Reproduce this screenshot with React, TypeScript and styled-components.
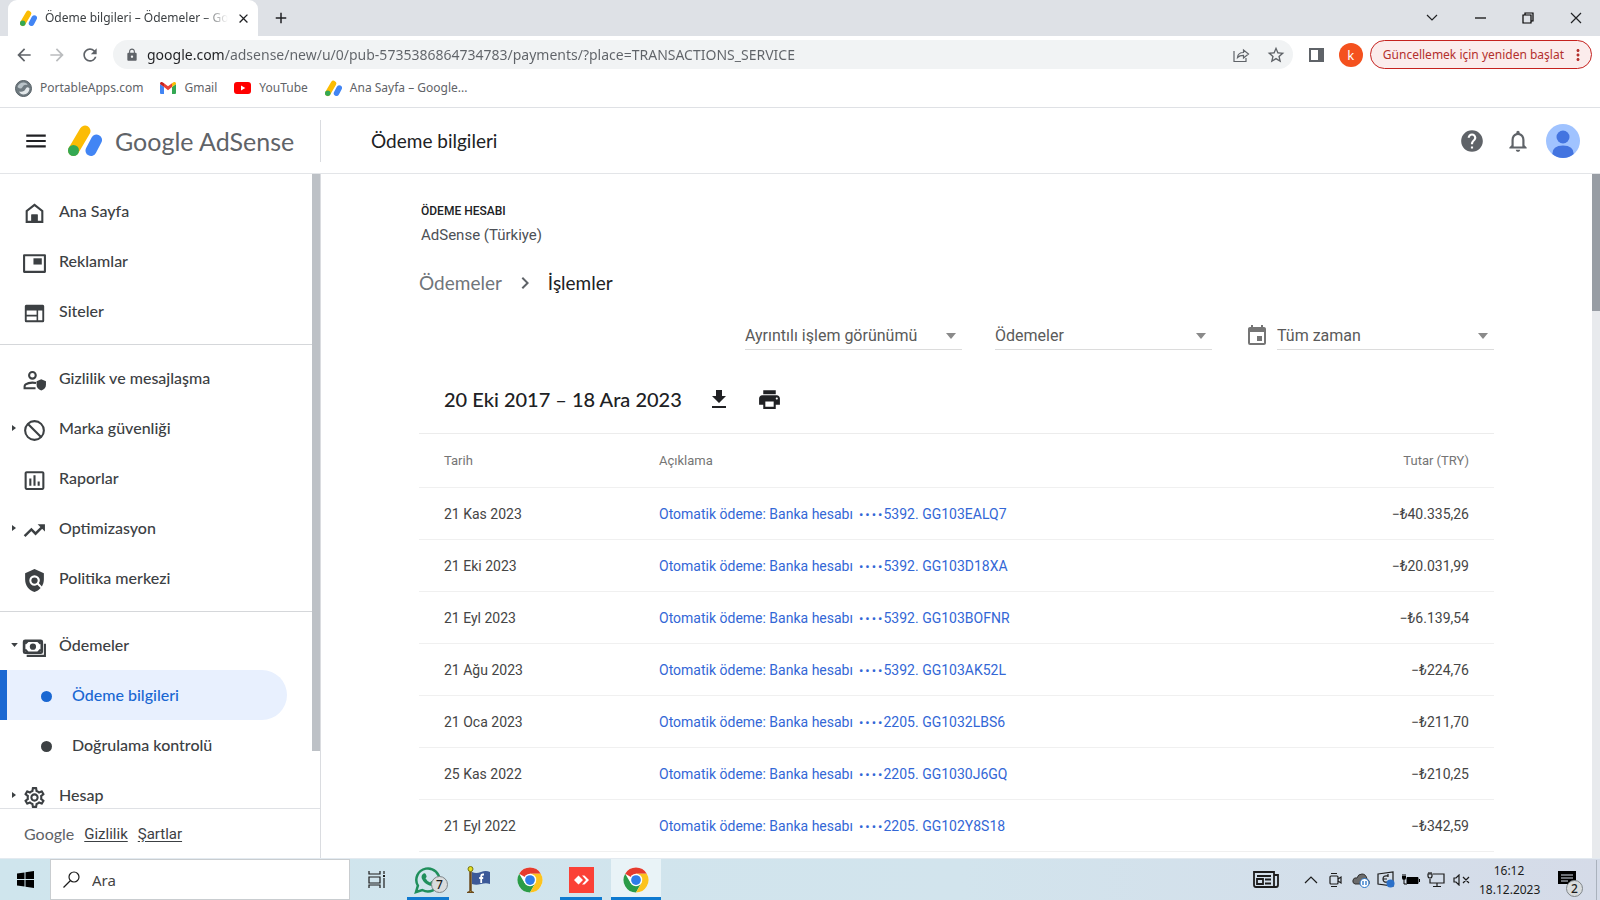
import React from 'react';
import styled, { createGlobalStyle, css } from 'styled-components';
import {
  MdArrowBack, MdArrowForward, MdRefresh, MdLock, MdStarBorder, MdClose, MdAdd, MdMenu, MdHelp,
  MdNotificationsNone, MdPolicy, MdPrint, MdEvent, MdChevronRight,
  MdInsertChartOutlined, MdOutlineSettings, MdMoreVert,
} from 'react-icons/md';

const sans = "'Lato', 'Open Sans', sans-serif";
const roboto = "'Roboto', sans-serif";
const system = "'Noto Sans', 'Open Sans', sans-serif";

const GlobalStyle = createGlobalStyle`
  *, *::before, *::after { box-sizing: border-box; }
  body { margin: 0; background: #fff; color: #3c4043; font-family: ${roboto}; }
  button, input, select { font: inherit; color: inherit; margin: 0; padding: 0; border: 0; background: none; outline: none; }
  button { cursor: pointer; display: inline-flex; align-items: center; justify-content: center; }
  a { color: inherit; text-decoration: none; }
  ul { list-style: none; margin: 0; padding: 0; }
  h1, h2, p { margin: 0; font-weight: 400; }
  svg { display: block; flex: none; }
`;

const Screen = styled.div`
  display: flex;
  flex-direction: column;
  height: 100vh;
  overflow: hidden;
`;

/* ---------- browser frame ---------- */

const TabStrip = styled.div`
  display: flex;
  flex: none;
  align-items: center;
  height: 36px;
  padding-left: 8px;
  background: #dee1e6;
  color: #202124;
`;
const Tab = styled.div`
  display: flex;
  align-items: center;
  align-self: stretch;
  gap: 8px;
  width: 250px;
  padding: 0 8px 0 12px;
  border-radius: 9px 9px 0 0;
  background: #fff;
`;
const TabTitle = styled.span`
  flex: 1;
  white-space: nowrap;
  font: 12px/20px ${system};
  color: #3c4043;
  mask-image: linear-gradient(90deg, #000 86%, transparent);
`;
const TabButton = styled.button`
  width: 18px;
  height: 18px;
  font-size: 15px;
`;
const NewTab = styled(TabButton)`
  margin-left: 14px;
  font-size: 18px;
`;
const WindowControls = styled.div`
  display: flex;
  margin-left: auto;
`;
const WindowButton = styled.button`
  width: 48px;
  height: 30px;
`;

const Toolbar = styled.div`
  display: flex;
  flex: none;
  align-items: center;
  height: 37px;
  padding: 0 8px 0 12px;
  color: #5f6368;
`;
const NavButton = styled.button<{ $faded?: boolean }>`
  width: 23px;
  height: 24px;
  margin-right: 10px;
  font-size: 20px;
  color: ${p => (p.$faded ? '#babcbe' : '#5f6368')};
`;
const AddressBar = styled.div`
  display: flex;
  flex: 1;
  align-items: center;
  gap: 8px;
  height: 29px;
  margin-left: 2px;
  padding: 0 6px 0 12px;
  border-radius: 15px;
  background: #f1f3f4;
  font-size: 14px;
`;
const AddressInput = styled.input`
  flex: 1;
  min-width: 0;
  height: 24px;
  font: 14px/24px ${system};
  background: linear-gradient(90deg, #202124 77px, #5f6368 77px);
  background-clip: text;
  -webkit-background-clip: text;
  -webkit-text-fill-color: transparent;
`;
const BarButton = styled.button`
  width: 22px;
  height: 22px;
  margin-left: 4px;
`;
const PanelButton = styled(BarButton)`
  margin: 0 11px 0 13px;
`;
const Profile = styled.button`
  width: 24px;
  height: 24px;
  margin-right: 7px;
  border-radius: 50%;
  background: #f4511e;
  color: #fff;
  font: 13px/24px ${system};
`;
const UpdateButton = styled.button`
  gap: 5px;
  height: 29px;
  padding: 0 4px 0 12px;
  border: 1px solid #c5221f;
  border-radius: 15px;
  background: #fbecec;
  color: #b3302d;
  font: 12px/20px ${system};
`;

const Bookmarks = styled.nav`
  display: flex;
  flex: none;
  align-items: center;
  gap: 17px;
  height: 35px;
  padding: 0 15px 4px;
  border-bottom: 1px solid #dfe1e5;
  font: 12px/20px ${system};
  color: #5f6368;
`;
const Bookmark = styled.a`
  display: flex;
  align-items: center;
  gap: 8px;
`;

/* ---------- AdSense header ---------- */

const Header = styled.header`
  display: flex;
  flex: none;
  align-items: center;
  height: 66px;
  padding: 0 20px 0 24px;
  border-bottom: 1px solid #e3e5e8;
  color: #5f6368;
`;
const MenuButton = styled.button`
  width: 24px;
  height: 24px;
  margin-right: 20px;
  font-size: 26px;
  color: #202124;
`;
const Brand = styled.a`
  display: flex;
  align-items: center;
  gap: 13px;
  width: 253px;
  height: 42px;
  border-right: 1px solid #dadce0;
  font: 25px/36px ${sans};
`;
const PageTitle = styled.h1`
  margin-left: 50px;
  font: 19px/28px ${sans};
  color: #202124;
`;
const HeaderActions = styled.div`
  display: flex;
  align-items: center;
  gap: 10px;
  margin-left: auto;
`;
const IconButton = styled.button`
  padding: 0 5px;
  font-size: 26px;
`;
const AvatarButton = styled.button`
  border-radius: 50%;
`;

/* ---------- side navigation ---------- */

const Body = styled.div`
  display: flex;
  flex: 1;
  min-height: 0;
`;
const Sidebar = styled.aside`
  display: flex;
  flex: none;
  flex-direction: column;
  width: 321px;
  border-right: 1px solid #dadce0;
`;
const SideScroll = styled.div`
  display: flex;
  flex: 1;
  min-height: 0;
`;
const NavList = styled.nav`
  flex: 1;
  overflow: hidden;
  padding-top: 12px;
  font: 500 16px/24px ${sans};
`;
const ScrollTrack = styled.div<{ $track: string }>`
  flex: none;
  width: 8px;
  background: ${p => p.$track};
`;
const ScrollThumb = styled.div<{ $size: number; $color: string }>`
  height: ${p => p.$size}%;
  background: ${p => p.$color};
`;
const NavGroup = styled.ul`
  & + & {
    margin-top: 8px;
    padding-top: 8px;
    border-top: 1px solid #d5d7da;
  }
`;
const NavItem = styled.a`
  display: flex;
  align-items: center;
  height: 50px;
  padding-left: 10px;
  color: #3c4043;
`;
const Caret = styled.span`
  display: flex;
  justify-content: center;
  width: 8px;
  margin-right: 4px;
`;
const NavIcon = styled.span`
  display: flex;
  justify-content: center;
  width: 25px;
  margin-right: 12px;
  padding-top: 4px;
  font-size: 25px;
`;
const SubItem = styled.a<{ $active?: boolean }>`
  display: flex;
  align-items: center;
  gap: 20px;
  height: 50px;
  margin-right: 25px;
  padding-left: 34px;
  border-left: 7px solid transparent;
  color: #3c4043;
  ${p => p.$active && css`
    border-left-color: #1967d2;
    border-radius: 0 25px 25px 0;
    background: #e8f0fe;
    color: #1967d2;
  `}
`;
const Dot = styled.span`
  width: 11px;
  height: 11px;
  margin-top: 3px;
  border-radius: 50%;
  background: currentColor;
`;
const SideFooter = styled.footer`
  display: flex;
  align-items: center;
  gap: 10px;
  height: 50px;
  padding-left: 24px;
  border-top: 1px solid #dfe1e5;
  font: 15px/24px ${roboto};
  color: #3c4043;
  a { text-decoration: underline; text-underline-offset: 2px; }
`;
const GoogleMark = styled.span`
  font: 16px/24px ${sans};
  color: #5f6368;
`;

/* ---------- payments content ---------- */

const Main = styled.main`
  flex: 1;
  min-width: 0;
  overflow: hidden;
  padding: 26px 98px 0;
`;
const AccountLabel = styled.p`
  padding-left: 2px;
  font: 500 12px/22px ${roboto};
  color: #202124;
`;
const AccountName = styled.p`
  padding-left: 2px;
  font: 15px/26px ${roboto};
  color: #4d5156;
`;
const Crumbs = styled.nav`
  display: flex;
  align-items: center;
  gap: 11px;
  margin-top: 20px;
  font: 19px/30px ${sans};
  color: #202124;
  svg { font-size: 24px; color: #5f6368; }
`;
const CrumbLink = styled.a`
  color: #70757a;
`;
const Filters = styled.div`
  display: flex;
  justify-content: flex-end;
  gap: 33px;
  margin-top: 24px;
`;
const FilterField = styled.label`
  display: flex;
  align-items: center;
  gap: 8px;
  font-size: 24px;
  color: #757575;
`;
const SelectBox = styled.span`
  display: flex;
  align-items: center;
  width: 217px;
  height: 28px;
  border-bottom: 1px solid #dcdcdc;
  padding-right: 6px;
`;
const Select = styled.select`
  flex: 1;
  min-width: 0;
  appearance: none;
  font: 16px/24px ${roboto};
  color: #5a5a5a;
`;
const RangeBar = styled.div`
  display: flex;
  align-items: center;
  gap: 25px;
  height: 83px;
  padding: 15px 25px 0;
  color: #202124;
  button { width: 25px; height: 24px; font-size: 25px; }
`;
const RangeTitle = styled.h2`
  font: 500 20px/30px ${sans};
`;
const Transactions = styled.table`
  width: 100%;
  border-collapse: collapse;
  border-top: 1px solid #ececec;
  font: 14px/20px ${roboto};
  color: #454545;
  th, td { height: 52px; padding: 0; border-bottom: 1px solid #f0f0f0; text-align: left; font-weight: 400; }
  th { height: 54px; font-size: 13px; color: #757575; }
  th:first-child, td:first-child { width: 240px; padding-left: 25px; }
  th:last-child, td:last-child { padding-right: 25px; text-align: right; }
  a { color: #3367d6; }
`;
const MaskDots = styled.span`
  display: inline-flex;
  gap: 2px;
  margin: 0 1px 0 6px;
  font-size: 13px;
  line-height: 16px;
`;

/* ---------- Windows taskbar ---------- */

const Taskbar = styled.footer`
  display: flex;
  flex: none;
  align-items: stretch;
  height: 42px;
  border-top: 1px solid #e3eaf0;
  background: linear-gradient(90deg, #cfe5ed, #d2e4ed 60%, #d5dbe8);
  font-family: ${system};
  color: #1c1c1c;
`;
const TaskButton = styled.button<{ $running?: boolean; $active?: boolean; $wide?: boolean }>`
  position: relative;
  width: ${p => (p.$wide ? 50 : 42)}px;
  margin-right: ${p => (p.$wide ? 0 : 9)}px;
  border-bottom: 3px solid ${p => (p.$running ? '#0f7ad0' : 'transparent')};
  border-top: 3px solid transparent;
  ${p => p.$active && css`
    background: #e9f3f7;
    border-top-color: #e9f3f7;
  `}
`;
const SearchBox = styled.label`
  display: flex;
  align-items: center;
  gap: 12px;
  width: 300px;
  margin-right: 6px;
  padding-left: 12px;
  border: 1px solid #c9cdd0;
  background: #fff;
`;
const SearchInput = styled.input`
  flex: 1;
  min-width: 0;
  font: 15px/24px ${system};
  &::placeholder { color: #444; opacity: 1; }
`;
const Badge = styled.span<{ $x: number; $y: number }>`
  position: absolute;
  left: ${p => p.$x}px;
  top: ${p => p.$y}px;
  width: 17px;
  height: 17px;
  border: 1px solid #7f8589;
  border-radius: 50%;
  background: #d9dcdd;
  font: 500 12px/15px ${system};
  text-align: center;
`;
const Tray = styled.div`
  display: flex;
  align-items: center;
  gap: 5px;
  margin-left: auto;
`;
const TrayButton = styled.button`
  width: 20px;
  height: 30px;
`;
const NewsButton = styled.button`
  width: 28px;
  height: 30px;
  margin-right: 16px;
`;
const Clock = styled.time`
  width: 60px;
  margin: 0 13px 0 3px;
  font-size: 12px;
  line-height: 19px;
  text-align: center;
  white-space: nowrap;
`;
const NoticeButton = styled.button`
  position: relative;
  width: 40px;
  height: 40px;
  border-right: 1px solid #aab2bd;
  margin-right: 3px;
  padding-right: 20px;
`;

/* ---------- drawings ---------- */

const AdSenseLogo = ({ size }: { size: number }) => (
  <svg width={size} height={size} viewBox="0 0 34 32">
    <path d="M17 6 5.500 25.500" stroke="#fbbc04" strokeWidth="11" strokeLinecap="round" />
    <circle cx="5.500" cy="25.500" r="5.500" fill="#34a853" />
    <path d="M28.500 15 23 25.500" stroke="#4285f4" strokeWidth="11" strokeLinecap="round" />
  </svg>
);
const ChromeLogo = () => (
  <svg width="26" height="26" viewBox="0 0 48 48">
    <circle cx="24" cy="24" r="23" fill="#fff" />
    <path d="M24 24 4.080 12.500A23 23 0 0 1 43.920 12.500H24Z" fill="#e53b2e" />
    <path d="M4.080 12.500A23 23 0 0 0 24 47L34 29.700 24 35 14 29.700Z" fill="#2a9c48" />
    <path d="M43.920 12.500A23 23 0 0 1 24 47L34 29.700 34 18 24 12.500Z" fill="#fcc31e" />
    <circle cx="24" cy="24" r="11.500" fill="#fff" />
    <circle cx="24" cy="24" r="9" fill="#2f7de9" />
  </svg>
);
const GmailLogo = () => (
  <svg width="16" height="12" viewBox="0 0 16 12">
    <path d="M0 2v9q0 1 1 1h3V5L0 2Z" fill="#4285f4" />
    <path d="M16 2v9q0 1-1 1h-3V5l4-3Z" fill="#34a853" />
    <path d="M12 1.200V5l4-3V1.500Q15.500-.7 13.500.2Z" fill="#fbbc04" />
    <path d="M4 1.200V5L0 2V1.500Q.5-.7 2.500.2Z" fill="#c5221f" />
    <path d="M4 1.200 8 4.300 12 1.200V5L8 8.200 4 5Z" fill="#ea4335" />
  </svg>
);
const YouTubeLogo = () => (
  <svg width="17" height="12" viewBox="0 0 17 12">
    <rect width="17" height="12" rx="3" fill="#f00" />
    <path d="m7 3.500 4.300 2.500L7 8.500Z" fill="#fff" />
  </svg>
);
const PortableLogo = () => (
  <svg width="17" height="17" viewBox="0 0 17 17">
    <circle cx="8.500" cy="8.500" r="8" fill="#6f7a80" stroke="#566066" />
    <path d="M2.500 7Q4 2.500 8.500 2.500 12 2.500 12.500 5 9 4 7.500 7 6 10 2.500 7Z" fill="#b9c3c8" />
    <path d="M4 11.500q5 1 6.500-2.500Q12 6 14.500 8.500 14 14 8.500 14.500 5.500 14.500 4 11.500Z" fill="#e3e8ea" />
  </svg>
);
const HomeIcon = () => (
  <svg width="25" height="25" viewBox="0 0 24 24" fill="currentColor">
    <path d="M12 2.500 3.500 9v12h17V9L12 2.500Zm6.500 16.500h-3.500v-6H9v6H5.500v-9L12 5l6.500 5v9Z" />
    <path d="M9 13h6v7H9z" />
  </svg>
);
const AdsIcon = () => (
  <svg width="25" height="25" viewBox="0 0 24 24" fill="currentColor">
    <path d="M22 3H2Q1 3 1 4v16q0 1 1 1h20q1 0 1-1V4q0-1-1-1Zm-1 16H3V5h18v14Z" />
    <path d="M11 7h8v6h-8z" />
  </svg>
);
const SitesIcon = () => (
  <svg width="25" height="25" viewBox="0 0 24 24" fill="currentColor">
    <path d="M20 3.500H4q-1.300 0-1.300 1.500v14Q2.700 20.500 4 20.500h16q1.300 0 1.300-1.500V5q0-1.500-1.300-1.500ZM14 18.500H4.500v-3.700H14v3.700Zm0-5.200H4.500V9H14v4.300Zm5.500 5.200h-4V9h4v9.500Z" />
  </svg>
);
const PrivacyIcon = () => (
  <svg width="25" height="25" viewBox="0 0 24 24" fill="none">
    <circle cx="10" cy="7" r="3.200" stroke="currentColor" strokeWidth="2" />
    <path d="M13.500 14.500Q11.500 14 10 14q-4 0-6.500 1.800-1 .7-1 1.800V19.500H13" stroke="currentColor" strokeWidth="2" />
    <path d="m18.500 10.800 4.500 2v3.200q0 4-4.500 5.500-4.500-1.500-4.500-5.500v-3.200Z" fill="currentColor" />
  </svg>
);
const BlockIcon = () => (
  <svg width="25" height="25" viewBox="0 0 24 24" fill="none" stroke="currentColor" strokeWidth="2">
    <circle cx="12" cy="12" r="9" />
    <path d="m5.500 5.500 13 13" />
  </svg>
);
const TrendIcon = () => (
  <svg width="25" height="25" viewBox="0 0 24 24" fill="none" stroke="currentColor" strokeWidth="2.400">
    <path d="m2.500 17.500 6.500-6.500 4 4 7-7" />
    <path d="M15 6h7v7Z" fill="currentColor" stroke="none" />
  </svg>
);
const PaymentsIcon = () => (
  <svg width="25" height="25" viewBox="0 0 24 24" fill="none" stroke="currentColor">
    <rect x="2" y="5.500" width="17" height="11.500" rx="1" strokeWidth="2.500" />
    <circle cx="10.500" cy="11.200" r="3" fill="currentColor" stroke="none" />
    <path d="M3 8.500 5.500 6M18 8.500 15.500 6M3 14l2.500 2.500M18 14l-2.500 2.500" strokeWidth="2" />
    <path d="M4.500 20H22V8.500" strokeWidth="2" />
  </svg>
);
const RightCaret = () => <svg width="4" height="6" viewBox="0 0 4 6"><path d="M0 0v6l4-3Z" fill="currentColor" /></svg>;
const DownCaret = ({ wide }: { wide?: boolean }) => (
  <svg width={wide ? 10 : 7} height={wide ? 6 : 4} viewBox="0 0 10 6"><path d="M0 0h10L5 6Z" fill={wide ? '#8a8a8a' : 'currentColor'} /></svg>
);
const DownloadIcon = () => (
  <svg width="24" height="24" viewBox="0 0 24 24" fill="currentColor"><path d="M5 21h14v-2H5v2ZM19 9h-4V3H9v6H5l7 7 7-7Z" /></svg>
);
const WhatsAppIcon = () => (
  <svg width="28" height="28" viewBox="0 0 28 28" fill="none">
    <path d="M2 26l1.900-6.300A11.500 11.500 0 1 1 8.300 24Z" stroke="#1f8f5c" strokeWidth="2.500" />
    <path d="M9.500 7.500q1.500-1 2.300.7l.8 2q.2.800-1.100 2 1.600 3 4.600 4.300 1.300-1.600 2-1.400l2.500 1.200q.8.500 0 2-1.800 2.500-5.200 1.200-5.500-2-7.700-7.300-.7-3 1.800-4.700Z" fill="#1f8f5c" />
  </svg>
);
const FlagIcon = () => (
  <svg width="26" height="28" viewBox="0 0 26 28">
    <path d="M4.500 4v21" stroke="#6b4a1d" strokeWidth="2.500" />
    <circle cx="4.500" cy="3" r="2.500" fill="#e4df23" stroke="#777611" />
    <path d="M1 26.500q3.500-3 7 0Z" fill="#d5b436" stroke="#6b4a1d" />
    <path d="M6 6q4 2 9 0t9 0v12q-4-1.500-9 0t-9 0Z" fill="#3b5998" />
    <path d="M18 8.500h-1q-1.800 0-1.800 2V17M13.200 12h4" stroke="#fff" strokeWidth="1.800" fill="none" />
  </svg>
);
const RemoteIcon = () => (
  <svg width="25" height="26" viewBox="0 0 25 26">
    <rect width="25" height="26" fill="#fb4136" />
    <path d="M9.500 8.500 14 13l-4.500 4.500L5 13ZM13 8.500h2.500L20 13l-4.500 4.500H13L17 13Z" fill="#fff" />
  </svg>
);

const line = { fill: 'none', stroke: 'currentColor', strokeWidth: 1.2 } as const;

/* ---------- data ---------- */

type Entry = { label: string; icon: React.ReactNode; caret?: 'right' | 'down'; children?: { label: string; active?: boolean }[] };

const groups: Entry[][] = [
  [
    { label: 'Ana Sayfa', icon: <HomeIcon /> },
    { label: 'Reklamlar', icon: <AdsIcon /> },
    { label: 'Siteler', icon: <SitesIcon /> },
  ],
  [
    { label: 'Gizlilik ve mesajlaşma', icon: <PrivacyIcon /> },
    { label: 'Marka güvenliği', icon: <BlockIcon />, caret: 'right' },
    { label: 'Raporlar', icon: <MdInsertChartOutlined /> },
    { label: 'Optimizasyon', icon: <TrendIcon />, caret: 'right' },
    { label: 'Politika merkezi', icon: <MdPolicy /> },
  ],
  [
    {
      label: 'Ödemeler', icon: <PaymentsIcon />, caret: 'down',
      children: [{ label: 'Ödeme bilgileri', active: true }, { label: 'Doğrulama kontrolü' }],
    },
    { label: 'Hesap', icon: <MdOutlineSettings />, caret: 'right' },
  ],
];

const rows = [
  ['21 Kas 2023', '5392. GG103EALQ7', '40.335,26'],
  ['21 Eki 2023', '5392. GG103D18XA', '20.031,99'],
  ['21 Eyl 2023', '5392. GG103BOFNR', '6.139,54'],
  ['21 Ağu 2023', '5392. GG103AK52L', '224,76'],
  ['21 Oca 2023', '2205. GG1032LBS6', '211,70'],
  ['25 Kas 2022', '2205. GG1030J6GQ', '210,25'],
  ['21 Eyl 2022', '2205. GG102Y8S18', '342,59'],
];

const Filter = ({ label, value, icon }: { label: string; value: string; icon?: React.ReactNode }) => (
  <FilterField>
    {icon}
    <SelectBox>
      <Select aria-label={label} defaultValue={value}><option>{value}</option></Select>
      <DownCaret wide />
    </SelectBox>
  </FilterField>
);

export default function App() {
  return (
    <Screen>
      <GlobalStyle />
      <TabStrip>
        <Tab>
          <AdSenseLogo size={17} />
          <TabTitle>Ödeme bilgileri – Ödemeler – Go</TabTitle>
          <TabButton aria-label="Sekmeyi kapat"><MdClose /></TabButton>
        </Tab>
        <NewTab aria-label="Yeni sekme"><MdAdd /></NewTab>
        <WindowControls>
          <WindowButton aria-label="Sekmelerde ara"><svg width="12" height="8" viewBox="0 0 12 8" {...line}><path d="m1 1 5 5 5-5" /></svg></WindowButton>
          <WindowButton aria-label="Simge durumuna küçült"><svg width="11" height="2"><path d="M0 1h11" stroke="#000" strokeWidth="1.200" /></svg></WindowButton>
          <WindowButton aria-label="Önceki boyut"><svg width="12" height="12" viewBox="0 0 12 12" {...line} stroke="#000"><path d="M1 3h8v8H1zM3 3V1h8v8H9" /></svg></WindowButton>
          <WindowButton aria-label="Kapat"><svg width="12" height="12" viewBox="0 0 12 12" {...line}><path d="m1 1 10 10M11 1 1 11" /></svg></WindowButton>
        </WindowControls>
      </TabStrip>

      <Toolbar>
        <NavButton aria-label="Geri"><MdArrowBack /></NavButton>
        <NavButton aria-label="İleri" $faded><MdArrowForward /></NavButton>
        <NavButton aria-label="Yenile"><MdRefresh /></NavButton>
        <AddressBar>
          <MdLock />
          <AddressInput aria-label="Adres" defaultValue="google.com/adsense/new/u/0/pub-5735386864734783/payments/?place=TRANSACTIONS_SERVICE" />
          <BarButton aria-label="Paylaş">
            <svg width="17" height="17" viewBox="0 0 17 17" {...line}><path d="M1 5v10.500h12V12M4.500 11.500q.5-5 6-5V4l5 4-5 4V9.300q-4 0-6 2.200Z" /></svg>
          </BarButton>
          <BarButton aria-label="Yer işareti ekle"><MdStarBorder size={20} /></BarButton>
        </AddressBar>
        <PanelButton aria-label="Yan panel">
          <svg width="15" height="14" viewBox="0 0 15 14"><path d="M1 1h13v12H1z" fill="none" stroke="#5f6368" strokeWidth="2" /><path d="M9 1h5v12H9z" fill="#5f6368" /></svg>
        </PanelButton>
        <Profile>k</Profile>
        <UpdateButton>Güncellemek için yeniden başlat<MdMoreVert size={18} /></UpdateButton>
      </Toolbar>

      <Bookmarks>
        <Bookmark href="#"><PortableLogo />PortableApps.com</Bookmark>
        <Bookmark href="#"><GmailLogo />Gmail</Bookmark>
        <Bookmark href="#"><YouTubeLogo />YouTube</Bookmark>
        <Bookmark href="#"><AdSenseLogo size={17} />Ana Sayfa – Google...</Bookmark>
      </Bookmarks>

      <Header>
        <MenuButton aria-label="Ana menü"><MdMenu /></MenuButton>
        <Brand href="#"><AdSenseLogo size={34} /><span>Google AdSense</span></Brand>
        <PageTitle>Ödeme bilgileri</PageTitle>
        <HeaderActions>
          <IconButton aria-label="Yardım"><MdHelp /></IconButton>
          <IconButton aria-label="Bildirimler"><MdNotificationsNone /></IconButton>
          <AvatarButton aria-label="Hesap">
            <svg width="34" height="34" viewBox="0 0 34 34">
              <circle cx="17" cy="17" r="17" fill="#a0c3ff" />
              <circle cx="17" cy="13" r="6.500" fill="#4374e0" />
              <path d="M6.300 30q0-8.500 10.700-8.500T27.700 30Q23 34 17 34T6.300 30Z" fill="#4374e0" />
            </svg>
          </AvatarButton>
        </HeaderActions>
      </Header>

      <Body>
        <Sidebar>
          <SideScroll>
            <NavList>
              {groups.map((group, i) => (
                <NavGroup key={i}>
                  {group.map(item => (
                    <li key={item.label}>
                      <NavItem href="#">
                        <Caret>{item.caret === 'right' && <RightCaret />}{item.caret === 'down' && <DownCaret />}</Caret>
                        <NavIcon>{item.icon}</NavIcon>
                        {item.label}
                      </NavItem>
                      {item.children?.map(child => (
                        <SubItem key={child.label} href="#" $active={child.active}><Dot />{child.label}</SubItem>
                      ))}
                    </li>
                  ))}
                </NavGroup>
              ))}
            </NavList>
            <ScrollTrack $track="#fff"><ScrollThumb $size={91} $color="#bdc1c6" /></ScrollTrack>
          </SideScroll>
          <SideFooter>
            <GoogleMark>Google</GoogleMark>
            <a href="#">Gizlilik</a>
            <a href="#">Şartlar</a>
          </SideFooter>
        </Sidebar>

        <Main>
          <AccountLabel>ÖDEME HESABI</AccountLabel>
          <AccountName>AdSense (Türkiye)</AccountName>
          <Crumbs>
            <CrumbLink href="#">Ödemeler</CrumbLink>
            <MdChevronRight />
            <span>İşlemler</span>
          </Crumbs>
          <Filters>
            <Filter label="Görünüm" value="Ayrıntılı işlem görünümü" />
            <Filter label="İşlem türü" value="Ödemeler" />
            <Filter label="Tarih aralığı" value="Tüm zaman" icon={<MdEvent />} />
          </Filters>
          <RangeBar>
            <RangeTitle>20 Eki 2017 – 18 Ara 2023</RangeTitle>
            <button aria-label="İndir"><DownloadIcon /></button>
            <button aria-label="Yazdır"><MdPrint /></button>
          </RangeBar>
          <Transactions>
            <thead>
              <tr><th>Tarih</th><th>Açıklama</th><th>Tutar (TRY)</th></tr>
            </thead>
            <tbody>
              {rows.map(([date, ref, amount]) => (
                <tr key={date}>
                  <td>{date}</td>
                  <td>
                    <a href="#">
                      Otomatik ödeme: Banka hesabı
                      <MaskDots><span>•</span><span>•</span><span>•</span><span>•</span></MaskDots>
                      {ref}
                    </a>
                  </td>
                  <td>−₺{amount}</td>
                </tr>
              ))}
            </tbody>
          </Transactions>
        </Main>
        <ScrollTrack $track="#e8eaed"><ScrollThumb $size={20} $color="#989da4" /></ScrollTrack>
      </Body>

      <Taskbar>
        <TaskButton aria-label="Başlat" $wide>
          <svg width="17" height="17" viewBox="0 0 17 17"><path d="M0 2.500 7.500 1.400V8H0ZM8.500 1.200 17 0v8H8.500ZM0 9h7.500v6.600L0 14.500ZM8.500 9H17v8l-8.500-1.200Z" fill="#000" /></svg>
        </TaskButton>
        <SearchBox>
          <svg width="17" height="17" viewBox="0 0 17 17" {...line}><circle cx="11" cy="6" r="5" /><path d="m7.500 9.500-7 7" /></svg>
          <SearchInput aria-label="Ara" placeholder="Ara" />
        </SearchBox>
        <TaskButton aria-label="Görev görünümü">
          <svg width="18" height="17" viewBox="0 0 18 17" {...line}><path d="M1 0v3h11V0M1 6h11v6H1zM1 17v-3h11v3M16 0v3M16 7v10" /><path d="M15 5h2" strokeWidth="2" /></svg>
        </TaskButton>
        <TaskButton aria-label="WhatsApp" $running><WhatsAppIcon /><Badge $x={24} $y={14}>7</Badge></TaskButton>
        <TaskButton aria-label="Facebook"><FlagIcon /></TaskButton>
        <TaskButton aria-label="Chrome"><ChromeLogo /></TaskButton>
        <TaskButton aria-label="AnyDesk" $running><RemoteIcon /></TaskButton>
        <TaskButton aria-label="Chrome – AdSense" $running $active $wide><ChromeLogo /></TaskButton>
        <Tray>
          <NewsButton aria-label="Haberler">
            <svg width="26" height="18" viewBox="0 0 26 18" {...line} strokeWidth="1.800"><path d="M1 1h20v15H3q-2 0-2-2ZM21 4h4v10q0 2-2 2h-2M4 5h14M4 8h6v5H4zM12 8.500h6M12 12.500h6" /></svg>
          </NewsButton>
          <TrayButton aria-label="Gizli simgeler"><svg width="14" height="9" viewBox="0 0 14 9" {...line}><path d="m1 8 6-6 6 6" /></svg></TrayButton>
          <TrayButton aria-label="Kamera"><svg width="14" height="16" viewBox="0 0 14 16" {...line}><rect x="1" y="4" width="8" height="8" rx="1" /><path d="m9 7 3-2v6L9 9M2 1.500h6M2 14.500h6" /></svg></TrayButton>
          <TrayButton aria-label="OneDrive">
            <svg width="18" height="16" viewBox="0 0 18 16"><path d="M3 12Q0 11 1 8t4-2Q6 2 10 2t5 5q3 1 2 5Z" fill="#6b6b6b" stroke="#333" /><circle cx="12.500" cy="11" r="4.500" fill="#fff" stroke="#2573c9" /><path d="M11 9v4M14 9v4" stroke="#2573c9" strokeWidth="1.300" /></svg>
          </TrayButton>
          <TrayButton aria-label="Güncelleme">
            <svg width="18" height="17" viewBox="0 0 18 17" {...line}><path d="M1 3 16 1v14L1 13ZM11 5Q6 4 6 8t5 3M11 3v3M6 8h4" /><circle cx="13.500" cy="12.500" r="4" fill="#2b70c9" stroke="none" /></svg>
          </TrayButton>
          <TrayButton aria-label="Pil">
            <svg width="18" height="14" viewBox="0 0 18 14"><path d="M5 4.500h11v6H5z" fill="#000" stroke="#000" /><path d="M17 6h1v3h-1zM0 3h4v2q0 2-2 2T0 5Z" /><path d="M1 1v3M3 1v3M2 7v4h3" stroke="#000" fill="none" /></svg>
          </TrayButton>
          <TrayButton aria-label="Ağ"><svg width="18" height="16" viewBox="0 0 18 16" {...line}><path d="M6 2h11v9H3V7M10 11v3M6 14.500h8M1 2h4v2q0 2-2 2T1 4ZM2 0v2M4 0v2" /></svg></TrayButton>
          <TrayButton aria-label="Ses kapalı"><svg width="17" height="12" viewBox="0 0 17 12" {...line}><path d="M1 4h2l3-3v10L3 8H1ZM10 3l6 6M16 3l-6 6" /></svg></TrayButton>
          <Clock>16:12<br />18.12.2023</Clock>
          <NoticeButton aria-label="Bildirimler">
            <svg width="18" height="18" viewBox="0 0 18 18"><path d="M0 0h18v13h-4v5l-5-5H0Z" /><path d="M3 4h12M3 7h12M3 10h7" stroke="#d5dce8" /></svg>
            <Badge $x={9} $y={20}>2</Badge>
          </NoticeButton>
        </Tray>
      </Taskbar>
    </Screen>
  );
}
